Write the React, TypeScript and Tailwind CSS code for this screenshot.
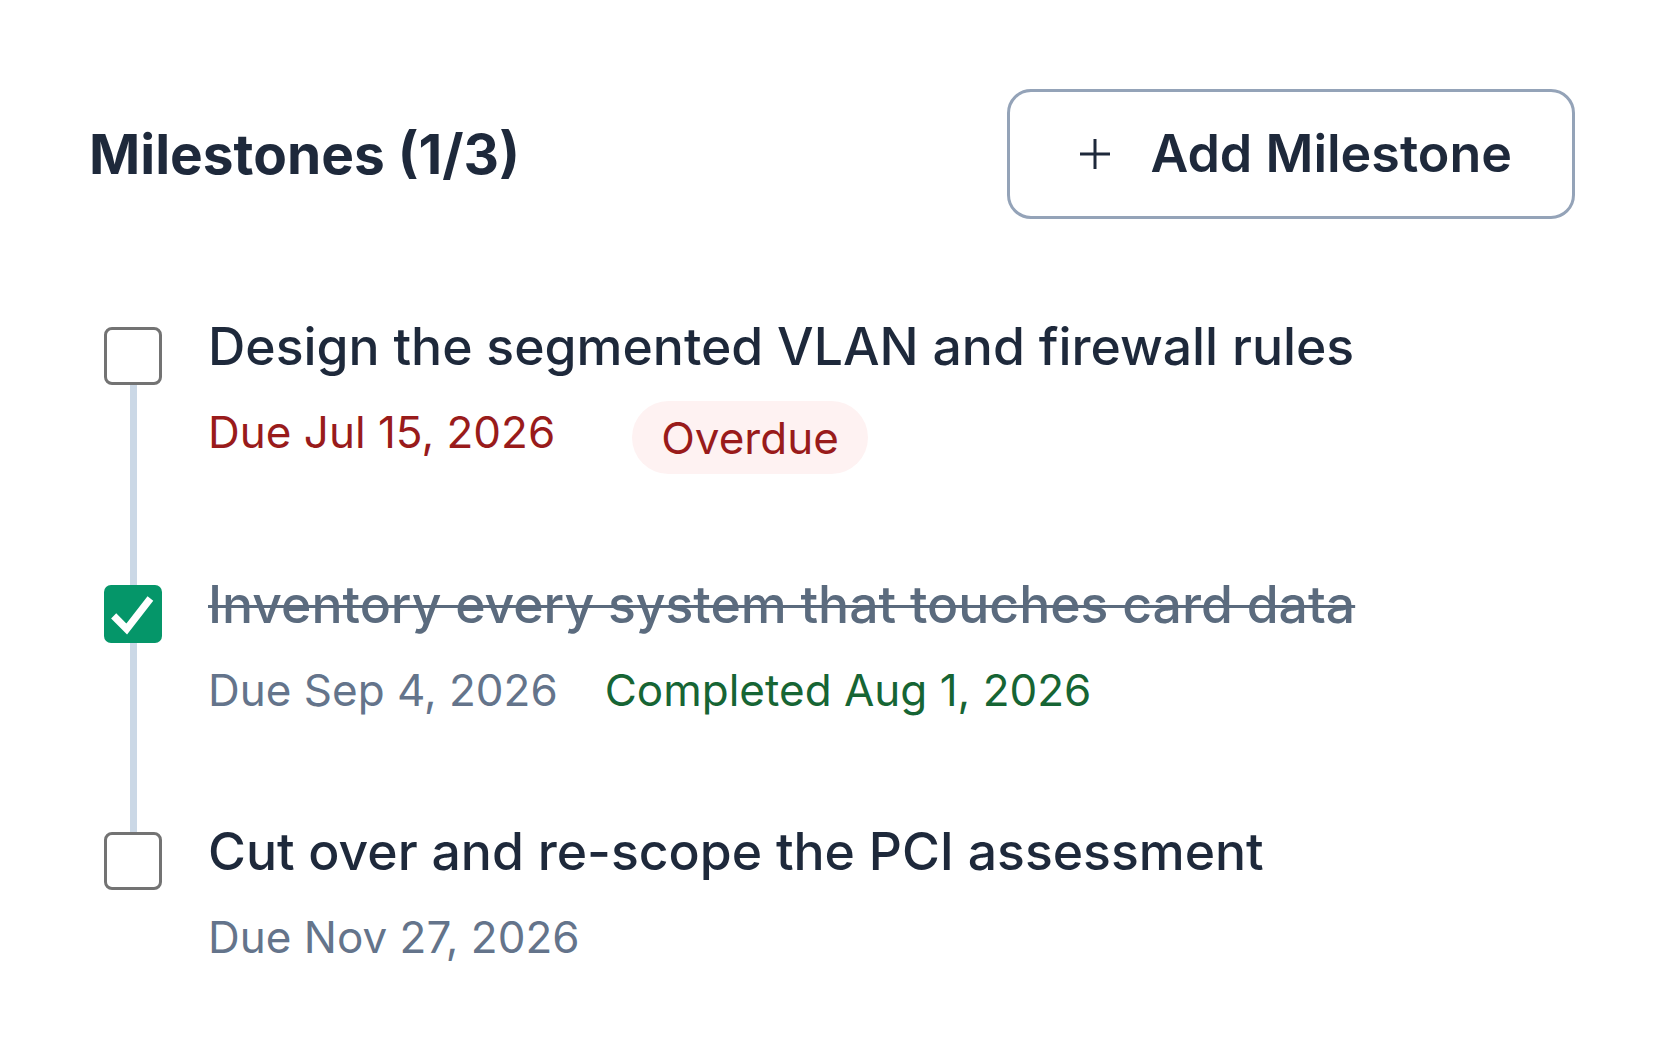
import React from 'react';

type Milestone = {
    id: number;
    title: string;
    due: string;
    done: boolean;
    completed?: string;
    overdue?: boolean;
};

const milestones: Milestone[] = [
    { id: 1, title: 'Design the segmented VLAN and firewall rules', due: 'Due Jul 15, 2026', done: false, overdue: true },
    { id: 2, title: 'Inventory every system that touches card data', due: 'Due Sep 4, 2026', done: true, completed: 'Completed Aug 1, 2026' },
    { id: 3, title: 'Cut over and re-scope the PCI assessment', due: 'Due Nov 27, 2026', done: false },
];

function Checkbox({ checked }: { checked: boolean }) {
    if (checked) {
        return (
            <div className="w-[58px] h-[58px] shrink-0 rounded-[7px] bg-[#059669] flex items-center justify-center">
                <svg width="58" height="58" viewBox="0 0 24 24" fill="none">
                    <path d="M4 12.8l5.4 5.4L19.2 5.6" stroke="white" strokeWidth="3" strokeLinecap="butt" strokeLinejoin="miter" />
                </svg>
            </div>
        );
    }
    return <div className="w-[58px] h-[58px] shrink-0 rounded-[8px] border-[3px] border-[#737373] bg-white" />;
}

export default function App() {
    const doneCount = milestones.filter(m => m.done).length;

    return (
        <div className="min-h-screen bg-white pl-[89px] pr-[89px] pt-[89px]" style={{ fontFamily: 'Inter, "Noto Sans", sans-serif' }}>
            {/* Header */}
            <div className="flex items-center justify-between">
                <h2 className="text-[55px] font-bold text-[#1e293b] leading-none">
                    Milestones ({doneCount}/{milestones.length})
                </h2>
                <button className="h-[130px] flex items-center pl-[69px] pr-[60px] rounded-[24px] border-[3px] border-[#94a3b8] bg-white text-[#1e293b]">
                    <svg width="32" height="32" viewBox="0 0 32 32" fill="none">
                        <path d="M16 1v30M1 16h30" stroke="currentColor" strokeWidth="3" />
                    </svg>
                    <span className="ml-[39px] text-[52px] font-semibold leading-none">Add Milestone</span>
                </button>
            </div>

            {/* Timeline */}
            <ul className="mt-[97px] pl-[15px]">
                {milestones.map((m, i) => {
                    const first = i === 0;
                    const last = i === milestones.length - 1;
                    return (
                        <li key={m.id} className="flex gap-[46px]">
                            <div className="w-[58px] shrink-0 flex flex-col items-center">
                                <div className={`w-[7px] h-[11px] ${first ? '' : 'bg-[#cbd8e6]'}`} />
                                <Checkbox checked={m.done} />
                                {!last && <div className="w-[7px] flex-1 bg-[#cbd8e6]" />}
                            </div>
                            <div className={last ? '' : 'pb-[100px]'}>
                                <div
                                    className={`text-[51.7px] font-medium leading-[60px] whitespace-nowrap ${
                                        m.done ? 'line-through text-[#5b6b7e] decoration-[3px]' : 'text-[#1e293b]'
                                    }`}
                                >
                                    {m.title}
                                </div>
                                <div className="mt-[25px] flex items-start text-[44px] leading-[62px]">
                                    <span className={m.overdue ? 'text-[#991b1b]' : 'text-[#64748b]'}>{m.due}</span>
                                    {m.overdue && (
                                        <span className="ml-[77px] h-[73px] px-[29px] py-[5.5px] rounded-full bg-[#fef2f2] text-[#991b1b]">
                                            Overdue
                                        </span>
                                    )}
                                    {m.completed && (
                                        <span className="ml-[47px] text-[#166534]">{m.completed}</span>
                                    )}
                                </div>
                            </div>
                        </li>
                    );
                })}
            </ul>
        </div>
    );
}
